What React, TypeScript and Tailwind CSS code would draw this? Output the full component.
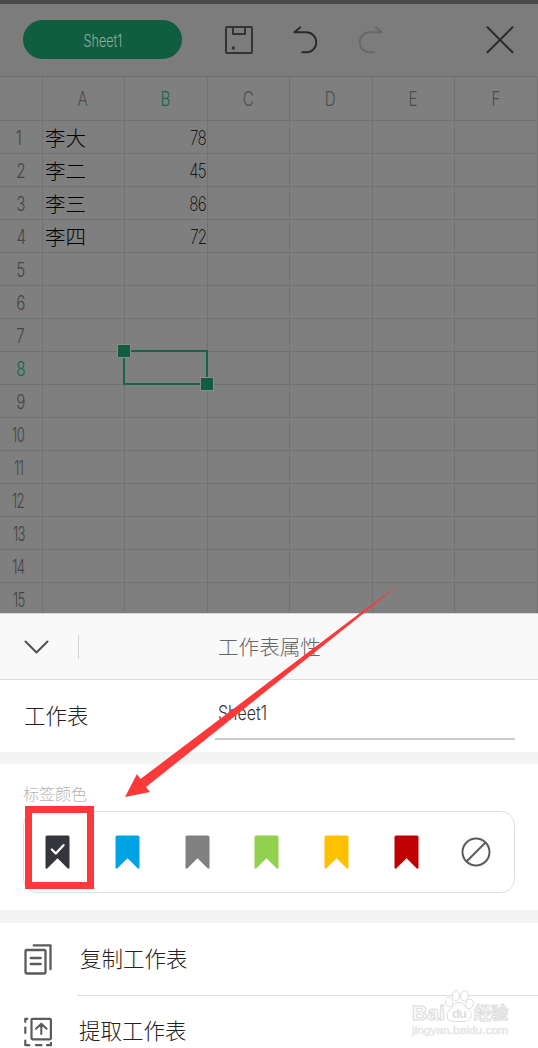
import clsx from "clsx";
import type { ReactNode } from "react";

const columns = ["A", "B", "C", "D", "E", "F"];

const names = ["李大", "李二", "李三", "李四"];
const scores = [78, 45, 86, 72];
const rows = Array.from({ length: 15 }, (_, i) => i + 1);

const ACTIVE_COLUMN = "B";
const ACTIVE_ROW = 8;

const tabColors = [
    { id: "dark", className: "text-[#35363c]" },
    { id: "blue", className: "text-[#00a4e4]" },
    { id: "gray", className: "text-[#808080]" },
    { id: "green", className: "text-[#92d050]" },
    { id: "yellow", className: "text-[#ffc000]" },
    { id: "red", className: "text-[#c00000]" },
];

// Narrow light lettering for latin text and digits
const Narrow = ({ children, className }: { children: ReactNode; className?: string }) => (
    <span className={clsx("inline-block font-['Inter','Roboto',sans-serif] whitespace-nowrap", className)}>
        {children}
    </span>
);

const SaveIcon = () => (
    <svg width="28" height="28" viewBox="0 0 28 28" fill="none" stroke="currentColor" strokeWidth="2" strokeLinejoin="round">
        <rect x="1" y="1" width="26" height="26" rx="1" />
        <path d="M8 1v7h12V1" />
        <rect x="7.5" y="21.2" width="1.6" height="1.6" strokeWidth="1.4" />
    </svg>
);

const UndoIcon = ({ className }: { className?: string }) => (
    <svg className={className} width="24" height="28" viewBox="0 0 24 28" fill="none" stroke="currentColor" strokeWidth="2" strokeLinecap="round" strokeLinejoin="round">
        <path d="M7 1.5L1.5 6.3H13.3a10 10 0 0 1 0 20H9.3" />
    </svg>
);

const CloseIcon = () => (
    <svg width="28" height="28" viewBox="0 0 28 28" fill="none" stroke="currentColor" strokeWidth="2" strokeLinecap="round">
        <path d="M1.5 1.3l25 25M26.5 1.3l-25 25" />
    </svg>
);

const BookmarkIcon = ({ checked, className }: { checked?: boolean; className?: string }) => (
    <svg className={clsx("shrink-0", className)} width="25" height="34" viewBox="0 0 25 34" fill="none">
        <path
            d="M2 .5h21a1.5 1.5 0 0 1 1.5 1.5v30.6a1 1 0 0 1-1.7.8L12.5 23.2 2.2 33.4a1 1 0 0 1-1.7-.8V2A1.5 1.5 0 0 1 2 .5z"
            fill="currentColor"
        />
        {checked && <path d="M6.8 14.5l4 4 7.7-8.3" stroke="#fff" strokeWidth="2.3" strokeLinecap="round" strokeLinejoin="round" />}
    </svg>
);

const NoneIcon = () => (
    <svg className="-ml-[2.5px] shrink-0" width="30" height="30" viewBox="0 0 30 30" fill="none" stroke="#5b5b5b" strokeWidth="2">
        <circle cx="15" cy="15" r="13.5" />
        <path d="M5.5 24.5l19-19" />
    </svg>
);

const CopyIcon = () => (
    <svg width="28" height="31" viewBox="0 0 28 31" fill="none" stroke="#5b5b5b" strokeWidth="2.3" strokeLinejoin="round" strokeLinecap="round">
        <rect x="1.5" y="6" width="20" height="23.5" rx="1.2" />
        <path d="M9.7 1.3H26.5V25.3" />
        <path d="M6.7 14h10M6.7 20h10" />
    </svg>
);

const ExtractIcon = () => (
    <svg width="28" height="30" viewBox="0 0 28 30" fill="none" stroke="#5b5b5b" strokeWidth="2.2" strokeLinejoin="round" strokeLinecap="round">
        <rect x="7.5" y="1.8" width="19.4" height="20.5" rx="1" />
        <path d="M17.3 17V7M12 11.8L17.3 6.700l5.300 5.100" strokeWidth="2" />
        <path d="M3.300 1.800H1.300v3M1.300 10.500v5.500M1.300 23.500v4.700h4M12 28.200h5.500M23 28.200h4v-2.400" />
    </svg>
);

const Toolbar = () => (
    <header className="flex h-[73px] items-center border-b border-[#707070] bg-[#7c7c7c] pr-6 pb-px pl-[23px] text-[#2a2a2a]">
        <button className="flex h-[39px] w-[159px] items-center justify-center rounded-full bg-[#115d40] text-[17.5px] text-[#8fae9f]">
            <Narrow className="scale-x-[0.72] pt-[3px] font-light">Sheet1</Narrow>
        </button>
        <div className="ml-[43px] text-[#333]"><SaveIcon /></div>
        <UndoIcon className="ml-10" />
        <UndoIcon className="ml-[42px] -scale-x-100 text-[#686868]" />
        <div className="ml-auto"><CloseIcon /></div>
    </header>
);

const cellBorder = "border-r border-b border-[#727272]";

const Selection = () => (
    <div className="absolute -top-[2px] -left-[2px] z-10 h-[35px] w-[85px] border-2 border-[#146646]">
        <span className="absolute -top-[8px] -left-[8px] size-[14px] border border-[#8a8a8a] bg-[#115d40]" />
        <span className="absolute -right-[8px] -bottom-[8px] size-[14px] border border-[#8a8a8a] bg-[#115d40]" />
    </div>
);

const Grid = () => (
    <main className="h-[536px] overflow-hidden bg-[#7f7f7f] font-['Noto_Sans_CJK_SC',sans-serif]">
        <div className="grid h-11 grid-cols-[43px_82px_83px_82px_83px_82px_83px] text-xl text-[#4c4c4c]">
            <div className={cellBorder} />
            {columns.map((col) => (
                <div key={col} className={clsx("flex items-center justify-center pr-px", cellBorder, col === ACTIVE_COLUMN && "text-[#146646]")}>
                    <Narrow className="scale-x-[0.76] pt-px font-light">{col}</Narrow>
                </div>
            ))}
        </div>
        {rows.map((row) => (
            <div key={row} className="grid h-[33px] grid-cols-[43px_82px_83px_82px_83px_82px_83px] text-xl text-black">
                <div className={clsx("flex items-center justify-center", cellBorder, row === ACTIVE_ROW ? "text-[#146646]" : "text-[#444]", row === 1 || row > 9 ? "pr-[5px]" : "pr-px")}>
                    <Narrow className={clsx("pt-[2px] font-light tracking-tighter", row < 10 ? "scale-x-[0.76]" : "scale-x-[0.66]")}>{row}</Narrow>
                </div>
                {columns.map((col) => (
                    <div key={col} className={clsx("relative flex items-center", cellBorder)}>
                        {col === "A" && <span className="pl-[2px] text-[20.5px] font-light">{names[row - 1]}</span>}
                        {col === "B" && (
                            <Narrow className="mr-px ml-auto origin-right scale-x-[0.76] pt-[2px] font-extralight tracking-tighter">{scores[row - 1]}</Narrow>
                        )}
                        {col === ACTIVE_COLUMN && row === ACTIVE_ROW && <Selection />}
                    </div>
                ))}
            </div>
        ))}
    </main>
);

const PropertiesSheet = () => (
    <section className="bg-white font-['Noto_Sans_CJK_SC',sans-serif] font-light">
        <div className="flex h-[67px] items-center border-y border-t-[#d4d4d4] border-b-[#dedede] bg-[#f9f9f9] pl-6">
            <svg width="25" height="14" viewBox="0 0 25 14" fill="none" stroke="#505050" strokeWidth="2" strokeLinecap="round" strokeLinejoin="round">
                <path d="M1.5 1.5l11 11 11-11" />
            </svg>
            <div className="ml-[29px] h-6 w-px bg-[#d5d5d5]" />
            <h2 className="ml-[139px] text-[20.6px] text-[#666]">工作表属性</h2>
        </div>

        <div className="flex h-[72px] items-center pl-6">
            <span className="w-[191px] pb-[2px] text-[21.5px] text-[#222]">工作表</span>
            <div className="mt-px flex h-[46px] w-[300px] items-center border-b-2 border-[#cacaca] pb-[3px] pl-[3px] text-[19.5px] text-[#333]">
                <Narrow className="origin-left scale-x-[0.82] font-light">Sheet1</Narrow>
            </div>
        </div>

        <div className="h-3 bg-[#f4f4f4]" />

        <div className="h-[146px] pt-[17px] pr-[23px] pl-[23px]">
            <div className="h-[30px] text-base text-[#b4b4b4]">标签颜色</div>
            <div className="relative flex h-[82px] items-center gap-[44.8px] rounded-[14px] border border-[#dedede] pl-[21px]">
                {tabColors.map(({ id, className }, i) => (
                    <BookmarkIcon key={id} checked={i === 0} className={className} />
                ))}
                <NoneIcon />
                <div className="absolute -top-[6px] left-px h-[83px] w-[69px] border-7 border-[#fd3838]" />
            </div>
        </div>

        <div className="h-[13px] bg-[#f4f4f4]" />

        <div className="flex pl-6 text-[21.5px] text-[#222]">
            <div className="flex w-[53px] flex-col">
                <div className="flex h-[73px] items-center pb-px"><CopyIcon /></div>
                <div className="flex h-[72px] items-center"><ExtractIcon /></div>
            </div>
            <div className="flex-1">
                <div className="flex h-[73px] items-center border-b border-[#dedede] pb-[2px] pl-[3px]">复制工作表</div>
                <div className="flex h-[72px] items-center pb-[3px] pl-[2px]">提取工作表</div>
            </div>
        </div>
    </section>
);

const PointerArrow = () => (
    <svg className="pointer-events-none absolute top-[580px] left-[120px]" width="285" height="222" viewBox="120 580 285 222">
        <path d="M125 797L137 774L140.5 779L362 611.5L400 584L364 613L146 787L150 792Z" fill="#fd3838" />
    </svg>
);

const Watermark = () => (
    <svg className="pointer-events-none absolute top-[985px] left-[405px]" width="115" height="57" viewBox="405 985 115 57" fill="#fff" stroke="#dcdcdc" strokeWidth="1">
        <text x="412" y="1020" fontFamily="Liberation Sans" fontWeight="700" fontSize="20" textLength="33" lengthAdjust="spacingAndGlyphs">Bai</text>
        <ellipse cx="449" cy="1002" rx="3.6" ry="4.8" transform="rotate(-15 449 1002)" />
        <ellipse cx="456" cy="995.5" rx="3.7" ry="5.2" />
        <ellipse cx="464.5" cy="996" rx="3.7" ry="5.2" transform="rotate(12 464.5 996)" />
        <ellipse cx="469.5" cy="1004" rx="3.7" ry="4.8" transform="rotate(15 469.5 1004)" />
        <path d="M459 1002.5c5 0 6 4.5 9 7s4 5 2.5 8.5-5 3.5-11.5 3.5-10.5 0-11.5-3.5 0-6 2.5-8.5 4-7 9-7z" />
        <text x="452" y="1018" fontFamily="Liberation Sans" fontWeight="700" fontSize="13" textLength="15" fill="#dedede" stroke="none">du</text>
        <text x="474" y="1019" fontFamily="Noto Sans CJK SC" fontWeight="700" fontSize="17" textLength="34">经验</text>
        <text x="412" y="1034" fontFamily="Liberation Sans" fontSize="10" textLength="96" lengthAdjust="spacingAndGlyphs" fill="#e2e2e2" stroke="#e8e8e8" strokeWidth="0.5">jingyan.baidu.com</text>
    </svg>
);

export default function App() {
    return (
        <div className="relative h-[1048px] w-[538px] overflow-hidden bg-white">
            <div className="h-1 bg-[#4a4a4a]" />
            <Toolbar />
            <Grid />
            <PropertiesSheet />
            <PointerArrow />
            <Watermark />
        </div>
    );
}
